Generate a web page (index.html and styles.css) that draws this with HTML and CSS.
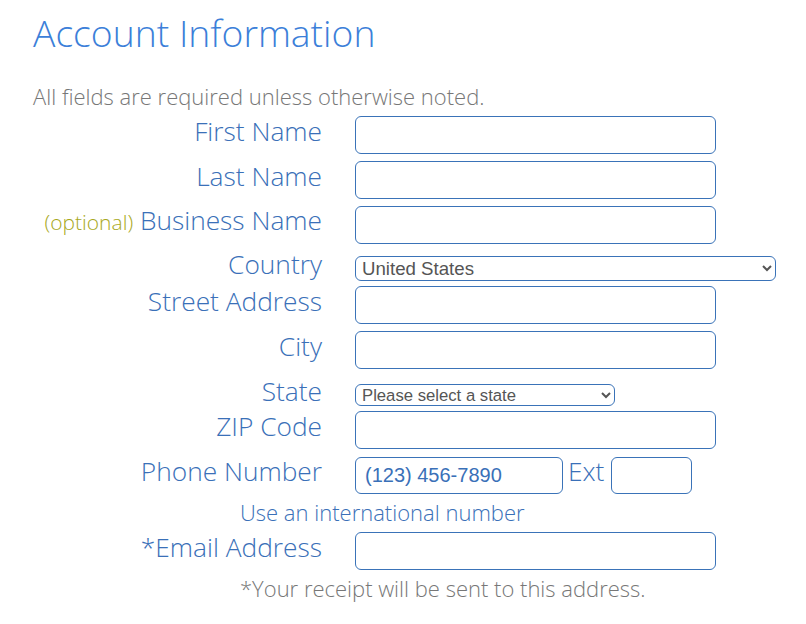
FILE: index.html
```html
<!DOCTYPE html>
<html lang="en">
<head>
<meta charset="utf-8">
<title>Account Information</title>
<link rel="stylesheet" href="styles.css">
</head>
<body>
<div class="page">
  <h1 class="title">Account Information</h1>
  <p class="note">All fields are required unless otherwise noted.</p>
  <div class="form">
    <div class="row r-first">
      <label class="lbl">First Name</label>
      <input class="field" type="text">
    </div>
    <div class="row r-last">
      <label class="lbl">Last Name</label>
      <input class="field" type="text">
    </div>
    <div class="row r-biz">
      <label class="lbl"><span class="opt">(optional)</span> Business Name</label>
      <input class="field" type="text">
    </div>
    <div class="row r-country">
      <label class="lbl">Country</label>
      <select class="sel sel-country"><option>United States</option></select>
    </div>
    <div class="row r-street">
      <label class="lbl">Street Address</label>
      <input class="field" type="text">
    </div>
    <div class="row r-city">
      <label class="lbl">City</label>
      <input class="field" type="text">
    </div>
    <div class="row r-state">
      <label class="lbl">State</label>
      <select class="sel sel-state"><option>Please select a state</option></select>
    </div>
    <div class="row r-zip">
      <label class="lbl">ZIP Code</label>
      <input class="field" type="text">
    </div>
    <div class="row r-phone">
      <label class="lbl">Phone Number</label>
      <input class="field phone-num" type="text" value="(123) 456-7890">
      <span class="ext-lbl">Ext</span>
      <input class="field ext" type="text">
    </div>
    <p class="help">Use an international number</p>
    <div class="row r-email">
      <label class="lbl">*Email Address</label>
      <input class="field" type="text">
    </div>
    <p class="foot">*Your receipt will be sent to this address.</p>
  </div>
</div>
</body>
</html>
```

FILE: styles.css
```css
html, body {
  margin: 0;
  padding: 0;
  background: #ffffff;
}
body {
  font-family: "Open Sans", "Noto Sans", sans-serif;
  font-weight: 300;
}
.page {
  padding: 8px 0 0 33px;
}
.title {
  margin: 0;
  font-size: 37.3px;
  line-height: 50px;
  font-weight: 300;
  color: #3c7fd9;
}
.note {
  margin: 23px 0 0;
  font-size: 22px;
  line-height: 30px;
  color: #777777;
}
.form {
  display: flex;
  flex-direction: column;
}
.row {
  display: flex;
  align-items: center;
  height: 38px;
}
.lbl {
  flex: 0 0 289px;
  margin-right: 33px;
  text-align: right;
  font-size: 26.3px;
  line-height: 32px;
  padding-bottom: 9px;
  color: #3a70b8;
  white-space: nowrap;
}
.opt {
  font-size: 21px;
  color: #a8a81c;
}
.field {
  box-sizing: border-box;
  flex: 0 0 auto;
  width: 361px;
  height: 38px;
  margin: 0;
  border: 1px solid #3a73b8;
  border-radius: 6px;
  background: #fff;
  padding: 0 8px;
  font-family: "Liberation Sans", Arial, sans-serif;
  font-size: 20px;
  color: #3a70b8;
  outline: none;
}
.sel {
  box-sizing: border-box;
  margin: 0;
  border: 1px solid #3a73b8;
  border-radius: 6px;
  background: #fff;
  padding: 0 2px;
  font-family: "Liberation Sans", Arial, sans-serif;
  color: #555555;
}
.sel-country {
  width: 421px;
  height: 25px;
  font-size: 18.67px;
}
.sel-state {
  width: 260px;
  height: 22px;
  font-size: 16.7px;
}
.r-first { margin-top: 5px; }
.r-last { margin-top: 7px; }
.r-biz { margin-top: 7px; }
.r-country { margin-top: 12px; height: 25px; }
.r-street { margin-top: 5px; }
.r-city { margin-top: 7px; }
.r-state { margin-top: 15px; height: 22px; }
.r-zip { margin-top: 5px; }
.r-phone { margin-top: 8px; height: 37px; }
.r-email { margin-top: 5px; }
.phone-num {
  width: 208px;
  height: 37px;
  padding-left: 9px;
}
.ext-lbl {
  font-size: 26.3px;
  line-height: 32px;
  padding-bottom: 9px;
  color: #3a70b8;
  margin: 0 7px 0 5px;
}
.ext {
  width: 81px;
  height: 37px;
}
.help {
  margin: 3px 0 0 207px;
  font-size: 22px;
  line-height: 30px;
  color: #3a70b8;
}
.foot {
  margin: 3px 0 0 207px;
  font-size: 22px;
  line-height: 30px;
  color: #777777;
}
```
